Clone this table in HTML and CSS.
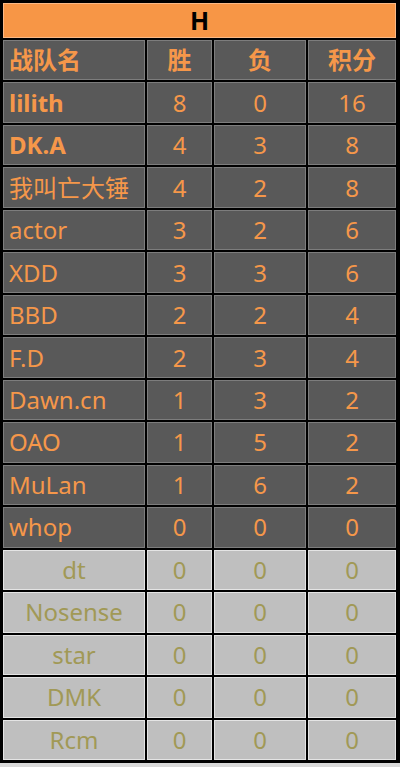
FILE: index.html
```html
<!DOCTYPE html>
<html lang="zh-CN">
<head>
<meta charset="utf-8">
<title>H组积分</title>
<link rel="stylesheet" href="styles.css">
</head>
<body>
<div class="board">
  <div class="cell title">H</div>

  <div class="cell head name">战队名</div>
  <div class="cell head">胜</div>
  <div class="cell head">负</div>
  <div class="cell head">积分</div>

  <div class="cell name strong">lilith</div><div class="cell">8</div><div class="cell">0</div><div class="cell">16</div>
  <div class="cell name strong">DK.A</div><div class="cell">4</div><div class="cell">3</div><div class="cell">8</div>
  <div class="cell name">我叫亡大锤</div><div class="cell">4</div><div class="cell">2</div><div class="cell">8</div>
  <div class="cell name">actor</div><div class="cell">3</div><div class="cell">2</div><div class="cell">6</div>
  <div class="cell name">XDD</div><div class="cell">3</div><div class="cell">3</div><div class="cell">6</div>
  <div class="cell name">BBD</div><div class="cell">2</div><div class="cell">2</div><div class="cell">4</div>
  <div class="cell name">F.D</div><div class="cell">2</div><div class="cell">3</div><div class="cell">4</div>
  <div class="cell name">Dawn.cn</div><div class="cell">1</div><div class="cell">3</div><div class="cell">2</div>
  <div class="cell name">OAO</div><div class="cell">1</div><div class="cell">5</div><div class="cell">2</div>
  <div class="cell name">MuLan</div><div class="cell">1</div><div class="cell">6</div><div class="cell">2</div>
  <div class="cell name">whop</div><div class="cell">0</div><div class="cell">0</div><div class="cell">0</div>

  <div class="cell out">dt</div><div class="cell out">0</div><div class="cell out">0</div><div class="cell out">0</div>
  <div class="cell out">Nosense</div><div class="cell out">0</div><div class="cell out">0</div><div class="cell out">0</div>
  <div class="cell out">star</div><div class="cell out">0</div><div class="cell out">0</div><div class="cell out">0</div>
  <div class="cell out">DMK</div><div class="cell out">0</div><div class="cell out">0</div><div class="cell out">0</div>
  <div class="cell out">Rcm</div><div class="cell out">0</div><div class="cell out">0</div><div class="cell out">0</div>
</div>
</body>
</html>
```
FILE: styles.css
```css
html, body {
  margin: 0;
  padding: 0;
  background: #d9d9d9;
}

body {
  font-family: "Noto Sans", "Noto Sans CJK SC", sans-serif;
}

.board {
  box-sizing: border-box;
  width: 400px;
  height: 763px;
  display: grid;
  grid-template-columns: 142px 65px 92px 88px;
  grid-template-rows: 35px repeat(17, 1fr);
  gap: 2px;
  padding: 3px 4px 3px 3px;
  background: #000;
}

.cell {
  box-sizing: border-box;
  display: flex;
  align-items: center;
  justify-content: center;
  background: #595959;
  border: 1px solid #7d7d7d;
  color: #f5974a;
  font-size: 24px;
  line-height: 1;
  white-space: nowrap;
}

.title {
  grid-column: 1 / -1;
  background: #f79646;
  border-color: #fbb985;
  color: #000;
  font-weight: 700;
  font-size: 25px;
}

.head {
  font-weight: 700;
}

.name {
  justify-content: flex-start;
  padding-left: 5px;
}

.strong {
  font-weight: 700;
}

.out {
  background: #bfbfbf;
  border-color: #e4e4e4;
  color: #a19956;
}
```
